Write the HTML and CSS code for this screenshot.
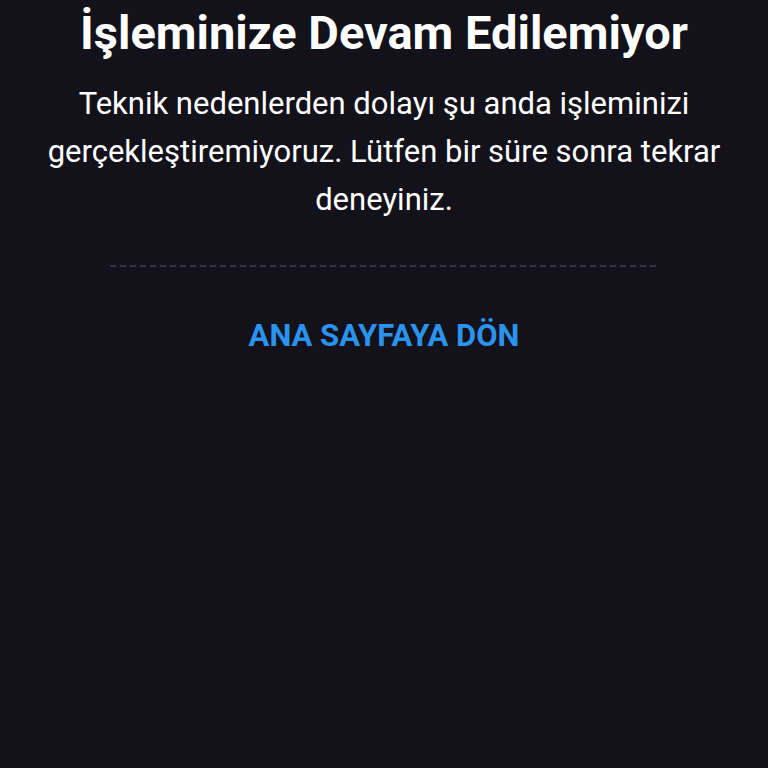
FILE: index.html
```html
<!DOCTYPE html>
<html lang="tr">
<head>
  <meta charset="UTF-8">
  <title>İşleminize Devam Edilemiyor</title>
  <link rel="stylesheet" href="styles.css">
</head>
<body>

  <div class="hata">
    <h1>İşleminize Devam Edilemiyor</h1>
    <p class="aciklama">Teknik nedenlerden dolayı şu anda işleminizi gerçekleştiremiyoruz. Lütfen bir süre sonra tekrar deneyiniz.</p>
    <div class="ayrac"></div>
    <a class="geri" href="#">ANA SAYFAYA DÖN</a>
  </div>

</body>
</html>
```

FILE: styles.css
```css
body {
  font-family: Roboto, "Noto Sans", sans-serif;
  background-color: #13121a;
  color: #fff;
  margin: 0;
}

.hata {
  display: flex;
  flex-direction: column;
  align-items: center;
  padding: 0 24px;
  text-align: center;
}

h1 {
  font-size: 47px;
  font-weight: 700;
  line-height: 56px;
  margin: 5px 0 0;
}

.aciklama {
  font-size: 31px;
  line-height: 48px;
  max-width: 692px;
  margin: 19px 0 0;
}

/* línea punteada */
.ayrac {
  width: 548px;
  height: 2px;
  background: repeating-linear-gradient(90deg, #34333f 0 6px, transparent 6px 10px);
  margin: 41px 0 0;
}

.geri {
  color: #2a93ee;
  font-size: 31px;
  font-weight: 700;
  line-height: 36px;
  text-decoration: none;
  margin-top: 51px;
}
```
